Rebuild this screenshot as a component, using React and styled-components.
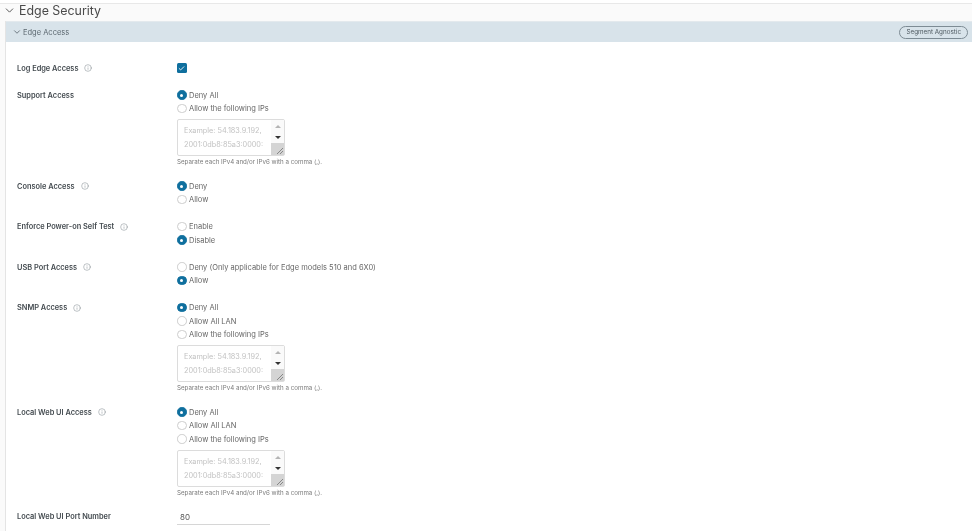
import React from 'react';
import styled, { createGlobalStyle } from 'styled-components';
import { ChevronDown, Info, Check } from 'lucide-react';

const GlobalStyle = createGlobalStyle`
  html, body {
    margin: 0;
    height: 531px;
    overflow: hidden;
    background: #fafafa;
    font-family: "Inter", "Liberation Sans", sans-serif;
  }
`;

const Page = styled.div`
  width: 972px;
  height: 531px;
  overflow: hidden;
  filter: blur(0.35px);
`;

const TopStrip = styled.div`
  height: 3px;
  background: #ffffff;
  border-bottom: 1px solid #e8e8e8;
`;

const SectionTitle = styled.div`
  box-sizing: border-box;
  display: flex;
  align-items: center;
  gap: 3px;
  height: 17px;
  padding: 0 0 5px 3px;
  color: #4a4a4a;
  font-size: 12.4px;
`;

const Card = styled.section`
  margin-left: 5px;
  padding-bottom: 30px;
  background: #ffffff;
  border-left: 1px solid #e4e4e4;
`;

const CardHeader = styled.header`
  box-sizing: border-box;
  display: flex;
  align-items: center;
  justify-content: space-between;
  height: 21px;
  padding: 0 4px 0 6px;
  background: #d8e3ea;
  border-top: 1px solid #e3e9ed;
`;

const CardTitle = styled.div`
  display: flex;
  align-items: center;
  gap: 1px;
  color: #5c6870;
  font-size: 7.5px;
`;

const Badge = styled.span`
  display: flex;
  align-items: center;
  height: 11px;
  padding: 0 6px;
  border: 1px solid #7d8b94;
  border-radius: 7px;
  color: #4f5a61;
  font-size: 6.3px;
`;

const Form = styled.div`
  display: flex;
  flex-direction: column;
  gap: 13.5px;
  padding: 19.25px 0 0 11px;
`;

const Row = styled.div`
  display: grid;
  grid-template-columns: 160px 1fr;
`;

const Label = styled.div`
  display: flex;
  align-items: center;
  gap: 6px;
  height: 13.5px;
  color: #444b50;
  font-size: 7.4px;
  font-weight: 600;
`;

const Control = styled.div`
  display: flex;
  flex-direction: column;
`;

const Option = styled.div`
  display: flex;
  align-items: center;
  gap: 2.5px;
  height: 13.5px;
  color: #666666;
  font-size: 7.5px;
`;

const Radio = styled.span`
  box-sizing: border-box;
  flex: none;
  display: flex;
  align-items: center;
  justify-content: center;
  width: 9.5px;
  height: 9.5px;
  border-radius: 50%;
  border: 1px solid ${(p) => (p.$on ? '#0f6f9e' : '#cdcdcd')};
  background: ${(p) => (p.$on ? '#0f6f9e' : '#ffffff')};
  &::after {
    content: '';
    display: ${(p) => (p.$on ? 'block' : 'none')};
    width: 3px;
    height: 3px;
    border-radius: 50%;
    background: #ffffff;
  }
`;

const CheckBox = styled.span`
  display: flex;
  align-items: center;
  justify-content: center;
  width: 9.5px;
  height: 9.5px;
  border-radius: 1.5px;
  background: #0f6f9e;
  color: #ffffff;
`;

const IpBox = styled.div`
  box-sizing: border-box;
  display: flex;
  width: 108px;
  height: 37px;
  margin-top: 4px;
  border: 1px solid #dcdcdc;
  border-radius: 2px;
  background: #ffffff;
`;

const Placeholder = styled.div`
  flex: 1;
  min-width: 0;
  overflow: hidden;
  padding: 4px 0 0 6px;
  color: #c2c2c2;
  font-size: 7.3px;
  line-height: 14px;
  white-space: nowrap;
`;

const Scrollbar = styled.div`
  flex: none;
  display: flex;
  flex-direction: column;
  width: 13px;
  padding-top: 1px;
  background: #fafafa;
`;

const ScrollArrow = styled.div`
  display: flex;
  align-items: center;
  justify-content: center;
  height: 11px;
  &::after {
    content: '';
    border-left: 3.5px solid transparent;
    border-right: 3.5px solid transparent;
    ${(p) => (p.$up ? 'border-bottom: 3.5px solid #b4b4b4;' : 'border-top: 3.5px solid #333333;')}
  }
`;

const ScrollThumb = styled.div`
  flex: 1;
  display: flex;
  align-items: flex-end;
  justify-content: flex-end;
  background: #d4d4d4;
`;

const Hint = styled.div`
  box-sizing: border-box;
  height: 9.5px;
  padding-top: 3px;
  line-height: 6.5px;
  color: #7b7b7b;
  font-size: 6.2px;
  white-space: nowrap;
`;

const NumberInput = styled.div`
  box-sizing: border-box;
  width: 93px;
  height: 15px;
  padding-left: 3px;
  border-bottom: 1px solid #d6d6d6;
  color: #555555;
  font-size: 8px;
  line-height: 15px;
`;

const InfoIcon = () => <Info size={8} color="#7d868c" strokeWidth={1.5} />;

const IpField = () => (
  <>
    <IpBox>
      <Placeholder>
        Example: 54.183.9.192,
        <br />
        2001:0db8:85a3:0000:
        <br />
        0000:8a2e:0370:7334
      </Placeholder>
      <Scrollbar>
        <ScrollArrow $up />
        <ScrollArrow />
        <ScrollThumb>
          <svg width="10" height="10" viewBox="0 0 10 10">
            <path d="M3 9 L9 3 M6 9 L9 6" stroke="#666666" strokeWidth="0.7" fill="none" />
          </svg>
        </ScrollThumb>
      </Scrollbar>
    </IpBox>
    <Hint>Separate each IPv4 and/or IPv6 with a comma (,).</Hint>
  </>
);

const rows = [
  { label: 'Support Access', options: ['Deny All', 'Allow the following IPs'], selected: 0, ips: true },
  { label: 'Console Access', info: true, options: ['Deny', 'Allow'], selected: 0 },
  { label: 'Enforce Power-on Self Test', info: true, options: ['Enable', 'Disable'], selected: 1 },
  { label: 'USB Port Access', info: true, options: ['Deny (Only applicable for Edge models 510 and 6X0)', 'Allow'], selected: 1 },
  { label: 'SNMP Access', info: true, options: ['Deny All', 'Allow All LAN', 'Allow the following IPs'], selected: 0, ips: true },
  { label: 'Local Web UI Access', info: true, options: ['Deny All', 'Allow All LAN', 'Allow the following IPs'], selected: 0, ips: true },
];

const App = () => (
  <Page>
    <GlobalStyle />
    <TopStrip />
    <SectionTitle>
      <ChevronDown size={13} color="#555555" strokeWidth={1.8} />
      Edge Security
    </SectionTitle>
    <Card>
      <CardHeader>
        <CardTitle>
          <ChevronDown size={10} color="#5c6870" strokeWidth={2} />
          Edge Access
        </CardTitle>
        <Badge>Segment Agnostic</Badge>
      </CardHeader>
      <Form>
        <Row>
          <Label>
            Log Edge Access
            <InfoIcon />
          </Label>
          <Option>
            <CheckBox>
              <Check size={7} strokeWidth={3} />
            </CheckBox>
          </Option>
        </Row>
        {rows.map((row) => (
          <Row key={row.label}>
            <Label>
              {row.label}
              {row.info && <InfoIcon />}
            </Label>
            <Control>
              {row.options.map((option, i) => (
                <Option key={option}>
                  <Radio $on={i === row.selected} />
                  {option}
                </Option>
              ))}
              {row.ips && <IpField />}
            </Control>
          </Row>
        ))}
        <Row>
          <Label>Local Web UI Port Number</Label>
          <NumberInput>80</NumberInput>
        </Row>
      </Form>
    </Card>
  </Page>
);

export default App;
